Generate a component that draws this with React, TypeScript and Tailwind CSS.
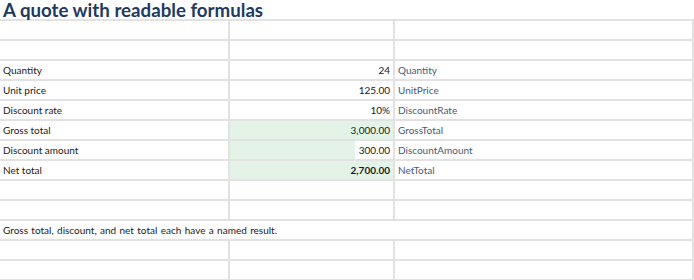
import React from "react";

type Row = {
  a?: string;
  b?: string;
  c?: string;
  green?: boolean;
  bold?: boolean;
  whiteVal?: boolean;
  merged?: string;
};

const rows: Row[] = [
  {},
  {},
  { a: "Quantity", b: "24", c: "Quantity" },
  { a: "Unit price", b: "125.00", c: "UnitPrice" },
  { a: "Discount rate", b: "10%", c: "DiscountRate" },
  { a: "Gross total", b: "3,000.00", c: "GrossTotal", green: true },
  { a: "Discount amount", b: "300.00", c: "DiscountAmount", green: true, whiteVal: true },
  { a: "Net total", b: "2,700.00", c: "NetTotal", green: true, bold: true },
  {},
  {},
  { merged: "Gross total, discount, and net total each have a named result." },
  {},
  {},
];

export default function App() {
  return (
    <div
      className="w-[694px] h-[280px] overflow-hidden bg-white text-[10px] text-[#1a1a1a]"
      style={{ fontFamily: "Lato, 'Open Sans', sans-serif" }}
    >
      <div className="h-[21px] border-b-2 border-[#e2e2e2] flex items-center pl-[3px] pt-[1px]">
        <span className="text-[18.7px] font-bold text-[#1f3a60] leading-none">
          A quote with readable formulas
        </span>
      </div>
      {rows.map((r, i) =>
        r.merged !== undefined ? (
          <div
            key={i}
            className="h-[20px] border-b-2 border-r-2 border-[#e2e2e2] flex items-center pl-[3px] pt-[1px] [word-spacing:0.8px]"
          >
            {r.merged}
          </div>
        ) : (
          <div key={i} className="h-[20px] flex border-b-2 border-[#e2e2e2]">
            <div className="w-[230px] border-r-2 border-[#e2e2e2] flex items-center pl-[3px] pt-[1px]">
              {r.a}
            </div>
            <div
              className={`w-[165px] border-r-2 border-[#e2e2e2] flex items-center justify-end ${
                r.green ? "bg-[#e4f3e8]" : ""
              }`}
            >
              <span
                className={`h-full flex items-center pr-[3px] pt-[1px] ${r.bold ? "font-bold" : ""} ${
                  r.whiteVal ? "bg-white pl-[4px]" : ""
                }`}
              >
                {r.b}
              </span>
            </div>
            <div className="flex-1 border-r-2 border-[#e2e2e2] flex items-center pl-[3px] pt-[1px] text-[#4a5878]">
              {r.c}
            </div>
          </div>
        )
      )}
    </div>
  );
}
